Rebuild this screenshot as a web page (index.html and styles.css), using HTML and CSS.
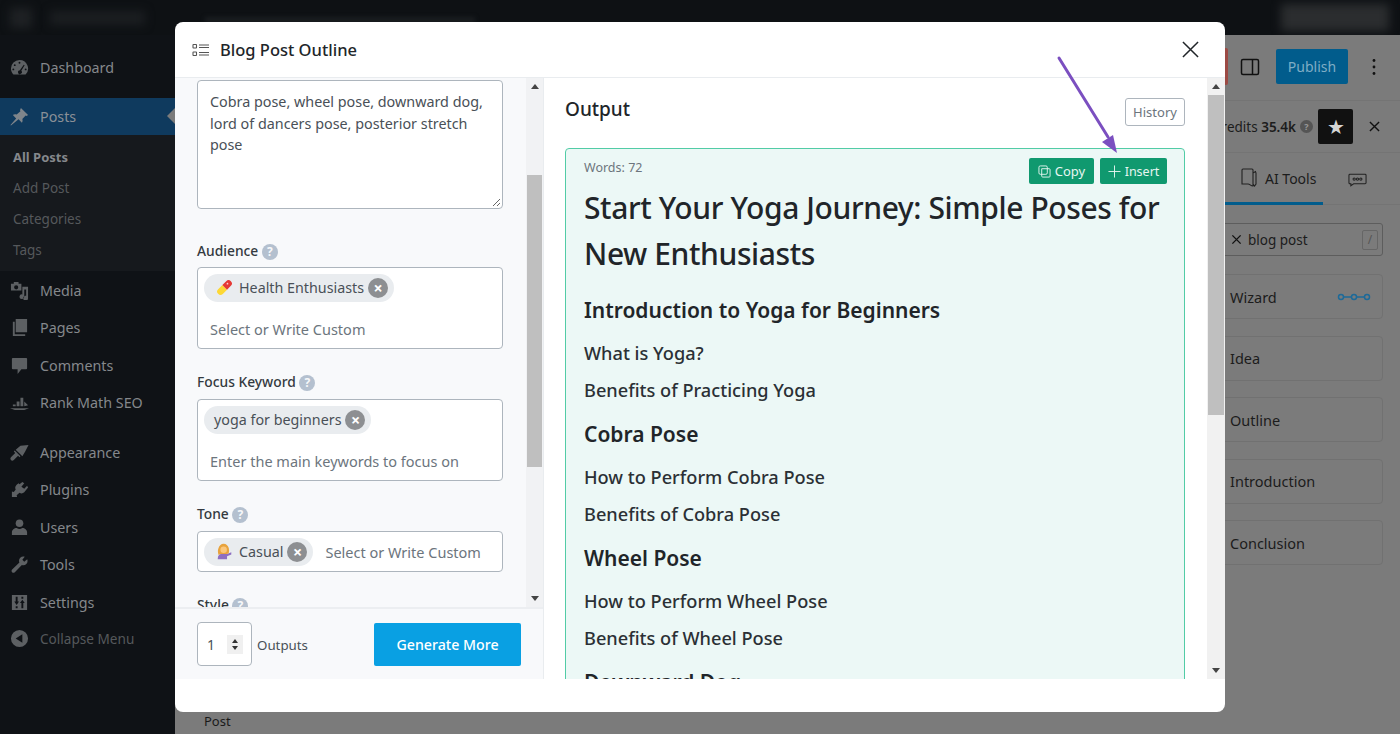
FILE: index.html
```html
<!DOCTYPE html>
<html lang="en">
<head>
    <meta charset="UTF-8">
    <meta name="viewport" content="width=device-width, initial-scale=1.0">
    <title>Blog Post Outline</title>
    <link rel="stylesheet" href="styles.css">
</head>
<body>
    <!-- Blurred admin bar -->
    <div class="adminbar">
        <span class="blur blur-logo"></span>
        <span class="blur blur-title"></span>
        <span class="blur blur-mid"></span>
        <span class="blur blur-user"></span>
    </div>

    <div class="page">
        <nav class="sidebar">
            <a class="menu-item first">
                <svg class="menu-icon" viewBox="0 0 20 20"><path d="M10 2a9 9 0 0 0-9 9c0 2.500 1 4.700 2.600 6.300h12.800A9 9 0 0 0 10 2zm0 2a1 1 0 1 1 0 2 1 1 0 0 1 0-2zM5 6.500a1 1 0 1 1 0 2 1 1 0 0 1 0-2zm9.500.6.900.5-3.500 5.900a2 2 0 1 1-1.500-.6zM3.500 11a1 1 0 1 1 0 2 1 1 0 0 1 0-2zm13 0a1 1 0 1 1 0 2 1 1 0 0 1 0-2z" fill-rule="evenodd"/></svg>
                Dashboard
            </a>
            <a class="menu-item active">
                <svg class="menu-icon" viewBox="0 0 20 20"><path d="M11.500 1l7.500 7.500-1.500 1-1-.5-3.500 3.500c.5 1.500.2 3-.5 4l-3.500-3.500L1 19.500l-.5-.5 6-7L3 8.500c1-.8 2.500-1 4-.5L11 4.500l-.5-1z"/></svg>
                Posts
                <span class="active-arrow"></span>
            </a>
            <div class="submenu">
                <a class="sub-item current">All Posts</a>
                <a class="sub-item">Add Post</a>
                <a class="sub-item">Categories</a>
                <a class="sub-item">Tags</a>
            </div>
            <a class="menu-item">
                <svg class="menu-icon" viewBox="0 0 20 20"><path d="M1 3h3V1h5v2h3v7H1zm5.500 1.500a2.200 2.200 0 1 0 0 4.400 2.200 2.200 0 0 0 0-4.400zM13 6h6v12a2.500 2.500 0 1 1-2-2.400V9h-2v7.500a2.500 2.500 0 1 1-2-2.400z" fill-rule="evenodd"/></svg>
                Media
            </a>
            <a class="menu-item">
                <svg class="menu-icon" viewBox="0 0 20 20"><path d="M6 1h12v14H6zM3 4h2v13h11v2H3z"/></svg>
                Pages
            </a>
            <a class="menu-item">
                <svg class="menu-icon" viewBox="0 0 20 20"><path d="M3 2h14a1 1 0 0 1 1 1v10a1 1 0 0 1-1 1h-5l-4 5v-5H3a1 1 0 0 1-1-1V3a1 1 0 0 1 1-1z"/></svg>
                Comments
            </a>
            <a class="menu-item">
                <svg class="menu-icon" viewBox="0 0 20 20"><path d="M7 9h3v5H7zM11 5h3v9h-3zM15 9l4 4-4 1zM3 12h3v2H3zM0 16h20l-5 2H5z"/></svg>
                Rank Math SEO
            </a>
            <a class="menu-item separated">
                <svg class="menu-icon" viewBox="0 0 20 20"><path d="M19.500 2l-8.500 1-5 4 7 7 3-5zM5 8l-1 1 1.500 1.500L1 15c-.8.8-.8 2 0 3s2 .8 3 0l4.500-4.500L10 15l1-1z"/></svg>
                Appearance
            </a>
            <a class="menu-item">
                <svg class="menu-icon" viewBox="0 0 20 20"><path d="M13 2l2 1.500-3 3.500 3 2.200 3-3.200 1 2-4 5c-1.500 1.500-3.500 1.500-5 .5L7 16l.5 2H2v-6l2 .5 2-2.500c-1-1.500-.5-3.500 1-5l2-1.500 1 1z"/></svg>
                Plugins
            </a>
            <a class="menu-item">
                <svg class="menu-icon" viewBox="0 0 20 20"><circle cx="10" cy="5.500" r="4"/><path d="M2 18v-3c0-2.500 2.500-4.500 5-4.500 1 .8 2 1 3 1s2-.2 3-1c2.500 0 5 2 5 4.500v3z"/></svg>
                Users
            </a>
            <a class="menu-item">
                <svg class="menu-icon" viewBox="0 0 20 20"><path d="M14 1.500c-2.500 0-4.500 2-4.500 4.500 0 .7.100 1.300.400 1.800L2 15.500a2 2 0 0 0 2.800 2.800l7.700-7.800c.5.200 1 .3 1.500.3 2.500 0 4.500-2 4.500-4.500 0-.7-.2-1.300-.4-1.800L15 7l-2-2 2.500-3.200c-.5-.2-1-.3-1.500-.3z"/></svg>
                Tools
            </a>
            <a class="menu-item">
                <svg class="menu-icon" viewBox="0 0 20 20"><path d="M2 2h16v16H2zm4 2v5H4.500L7 12.500 9.500 9H8V4zm0 10v2h2v-2zm6-10v2h2V4zm1 3-2.500 3.500H12V16h2v-5.500h1.500z" fill-rule="evenodd"/></svg>
                Settings
            </a>
            <a class="menu-item collapse">
                <svg class="menu-icon" viewBox="0 0 20 20"><path d="M10 1a9 9 0 1 0 0 18 9 9 0 0 0 0-18zm3 4.500v9L6 10z" fill-rule="evenodd"/></svg>
                Collapse Menu
            </a>
        </nav>

        <main class="editor">
            <div class="editor-top">
                <span class="save-sliver"></span>
                <svg class="panel-icon" viewBox="0 0 24 24"><rect x="3.500" y="4.500" width="17" height="15" rx="1.500"/><path d="M14.500 4.500v15"/></svg>
                <button class="publish">Publish</button>
                <svg class="dots" viewBox="0 0 4 18"><circle cx="2" cy="2.500" r="1.400"/><circle cx="2" cy="9" r="1.400"/><circle cx="2" cy="15.500" r="1.400"/></svg>
            </div>
            <div class="editor-body">
                <div class="canvas">
                    <div class="breadcrumb">Post</div>
                </div>
                <aside class="ai-panel">
                    <div class="credits">
                        <span class="credits-text">Credits <b>35.4k</b></span>
                        <span class="help dark">?</span>
                        <span class="star-btn">★</span>
                        <svg class="panel-close" viewBox="0 0 12 12"><path d="M1 1l10 10M11 1L1 11"/></svg>
                    </div>
                    <div class="tabs">
                        <div class="tab selected">
                            <svg class="tab-icon" viewBox="0 0 16 20"><path d="M2 1h9a1 1 0 0 1 1 1v16c-2.500 0-3-2-5-2H1V2a1 1 0 0 1 1-1zM12 5l2.500-1.500L15 5v11l-1.500 2-1.500-2"/></svg>
                            AI Tools
                        </div>
                        <div class="tab chat">
                            <svg class="tab-icon wide" viewBox="0 0 20 14"><path d="M2 1h16a1 1 0 0 1 1 1v8a1 1 0 0 1-1 1H6l-3 2v-2H2a1 1 0 0 1-1-1V2a1 1 0 0 1 1-1z"/><circle cx="6.500" cy="6" r="1.200"/><circle cx="10" cy="6" r="1.200"/><circle cx="13.500" cy="6" r="1.200"/></svg>
                        </div>
                    </div>
                    <div class="tool-search">
                        <svg class="search-x" viewBox="0 0 12 12"><path d="M1.500 1.500l9 9M10.500 1.500l-9 9"/></svg>
                        blog post
                        <span class="slash">/</span>
                    </div>
                    <div class="tool-card">
                        Wizard
                        <svg class="wizard-icon" viewBox="0 0 34 10"><path d="M4 5h26"/><circle cx="4" cy="5" r="2.500"/><circle cx="17" cy="5" r="2.500"/><circle cx="30" cy="5" r="2.500"/></svg>
                    </div>
                    <div class="tool-card">Idea</div>
                    <div class="tool-card">Outline</div>
                    <div class="tool-card">Introduction</div>
                    <div class="tool-card">Conclusion</div>
                </aside>
            </div>
        </main>
    </div>

    <!-- Modal -->
    <div class="modal">
        <header class="modal-head">
            <svg class="outline-icon" viewBox="0 0 18 14"><rect x="1" y="1.500" width="3.500" height="3.500" rx=".5"/><rect x="1" y="9" width="3.500" height="3.500" rx=".5"/><path d="M7 2h10M7 4.500h10M7 9.500h10M7 12h10"/></svg>
            <h1>Blog Post Outline</h1>
            <svg class="modal-close" viewBox="0 0 18 18"><path d="M1 1l16 16M17 1L1 17"/></svg>
        </header>
        <div class="modal-body">
            <section class="form-col">
                <div class="form-main">
                    <div class="form-scroll">
                        <div class="textarea">Cobra pose, wheel pose, downward dog, lord of dancers pose, posterior stretch pose
                            <svg class="grip" viewBox="0 0 10 10"><path d="M9 2L2 9M9 6L6 9"/></svg>
                        </div>

                        <label class="field-label gap-top">Audience <span class="help">?</span></label>
                        <div class="chip-box stacked">
                            <span class="chip">
                                <svg class="emoji" viewBox="0 0 20 20"><path d="M2.500 12l5-5 5.500 5.500-5 5a3.800 3.800 0 0 1-5.500-5.500z" fill="#fdd835"/><path d="M7.500 7l4.500-4.500A3.800 3.800 0 0 1 17.500 8L13 12.500z" fill="#e53935"/><circle cx="13.500" cy="5.500" r="1" fill="#ffcdd2"/></svg>
                                Health Enthusiasts
                                <span class="chip-x">×</span>
                            </span>
                            <span class="placeholder">Select or Write Custom</span>
                        </div>

                        <label class="field-label">Focus Keyword <span class="help">?</span></label>
                        <div class="chip-box stacked">
                            <span class="chip plain">
                                yoga for beginners
                                <span class="chip-x">×</span>
                            </span>
                            <span class="placeholder">Enter the main keywords to focus on</span>
                        </div>

                        <label class="field-label">Tone <span class="help">?</span></label>
                        <div class="chip-box inline">
                            <span class="chip">
                                <svg class="emoji" viewBox="0 0 20 20"><path d="M2 19c0-4 2-6 4-6h7l5-2v2.500l-5 2V19z" fill="#8e6fc1"/><path d="M3 14c-1-3-1-6 0-8 1-3 3-5 6-5s5 2 6 5c.5 2 .5 4 0 6l-2 1H5z" fill="#e8a33d"/><circle cx="9" cy="8" r="3.800" fill="#fbc77d"/></svg>
                                Casual
                                <span class="chip-x">×</span>
                            </span>
                            <span class="placeholder">Select or Write Custom</span>
                        </div>

                        <label class="field-label">Style <span class="help">?</span></label>
                    </div>
                    <div class="scrollbar">
                        <span class="arrow up"></span>
                        <span class="thumb form-thumb"></span>
                        <span class="arrow down"></span>
                    </div>
                </div>
                <div class="form-foot">
                    <div class="stepper">
                        1
                        <span class="spin"><i class="spin-up"></i><i class="spin-down"></i></span>
                    </div>
                    <span class="outputs">Outputs</span>
                    <button class="generate">Generate More</button>
                </div>
            </section>

            <section class="output-col">
                <div class="output-scroll">
                    <div class="output-head">
                        <h2>Output</h2>
                        <button class="history">History</button>
                    </div>
                    <article class="result">
                        <div class="result-top">
                            <span class="words">Words: 72</span>
                            <button class="green-btn copy-btn">
                                <svg viewBox="0 0 14 14"><rect x="1" y="1" width="9" height="9" rx="1.500"/><path d="M4 4h8a1 1 0 0 1 1 1v7a1 1 0 0 1-1 1H5a1 1 0 0 1-1-1z"/></svg>
                                Copy
                            </button>
                            <button class="green-btn insert-btn">
                                <svg viewBox="0 0 14 14"><path d="M7 .5v13M.5 7h13"/></svg>
                                Insert
                            </button>
                        </div>
                        <h3 class="title">Start Your Yoga Journey: Simple Poses for New Enthusiasts</h3>
                        <h4>Introduction to Yoga for Beginners</h4>
                        <p>What is Yoga?</p>
                        <p>Benefits of Practicing Yoga</p>
                        <h4>Cobra Pose</h4>
                        <p>How to Perform Cobra Pose</p>
                        <p>Benefits of Cobra Pose</p>
                        <h4>Wheel Pose</h4>
                        <p>How to Perform Wheel Pose</p>
                        <p>Benefits of Wheel Pose</p>
                        <h4>Downward Dog</h4>
                    </article>
                </div>
                <div class="scrollbar wide">
                    <span class="arrow up"></span>
                    <span class="thumb output-thumb"></span>
                    <span class="arrow down"></span>
                </div>
            </section>
        </div>
        <div class="modal-pad"></div>
    </div>

    <!-- Annotation arrow drawn over the screenshot -->
    <svg class="annotation" viewBox="0 0 70 105"><path d="M4 3L53 82" stroke="#7b4fc0" stroke-width="3" fill="none" stroke-linecap="round"/><path d="M62 98L47 87 58 80z" fill="#7b4fc0"/></svg>
</body>
</html>
```

FILE: styles.css
```css
* {
    box-sizing: border-box;
}
html, body {
    height: 100%;
}
body {
    margin: 0;
    overflow: hidden;
    font-family: "Noto Sans", "Open Sans", sans-serif;
    background-color: #7b7b7b;
    color: #1d2327;
}
button {
    font-family: inherit;
    cursor: pointer;
}
svg {
    display: block;
    flex: none;
}

/* Admin bar */
.adminbar {
    height: 35px;
    background-color: #0e1114;
    display: flex;
    align-items: center;
    overflow: hidden;
}
.blur {
    display: block;
    filter: blur(5px);
}
.blur-logo {
    width: 22px;
    height: 20px;
    margin-left: 10px;
    background-color: #1e2124;
}
.blur-title {
    width: 95px;
    height: 14px;
    margin-left: 18px;
    background-color: #1b1e21;
}
.blur-mid {
    width: 270px;
    height: 6px;
    margin: 4px 0 0 60px;
    background-color: #1a1d20;
    filter: blur(2px);
}
.blur-user {
    width: 108px;
    height: 27px;
    margin-left: auto;
    margin-right: 11px;
    background-color: #2b2d2f;
}

/* Page */
.page {
    display: flex;
    height: 699px;
}

/* Sidebar */
.sidebar {
    width: 175px;
    flex: none;
    background-color: #0f1216;
    padding-top: 13.400px;
    color: #85888c;
    font-size: 14.300px;
}
.menu-item {
    display: flex;
    align-items: center;
    height: 37.500px;
    padding-left: 10px;
    gap: 11px;
    position: relative;
}
.menu-item.first {
    margin-bottom: 12px;
}
.menu-item.separated {
    margin-top: 12px;
}
.menu-icon {
    width: 19px;
    height: 19px;
    fill: #5d6063;
}
.menu-item.active {
    background-color: #0f3a5e;
    color: #8a9097;
}
.menu-item.active .menu-icon {
    fill: #7f858b;
}
.active-arrow {
    position: absolute;
    right: 0;
    top: 10px;
    border: 8px solid transparent;
    border-left: 0;
    border-right-color: #7b7b7b;
}
.collapse {
    color: #55585b;
    font-size: 13.600px;
    height: 35px;
}
.submenu {
    background-color: #16191d;
    padding: 7px 0 5px 13px;
    font-size: 13.500px;
    color: #55585b;
    height: 136px;
}
.sub-item {
    display: flex;
    align-items: center;
    height: 30.700px;
}
.sub-item.current {
    color: #85888c;
    font-weight: 700;
    font-size: 13px;
    padding-bottom: 2px;
}

/* Editor behind the modal */
.editor {
    flex: 1;
    display: flex;
    flex-direction: column;
    min-width: 0;
}
.editor-top {
    height: 66px;
    flex: none;
    display: flex;
    align-items: center;
    justify-content: flex-end;
    padding: 0 24px 2px 0;
    border-bottom: 1px solid #747474;
}
.save-sliver {
    width: 30px;
    height: 37px;
    background-color: #9c4a44;
    border-radius: 2px;
    margin-right: 10px;
}
.panel-icon {
    width: 24px;
    height: 24px;
    fill: none;
    stroke: #111;
    stroke-width: 1.500;
    margin-right: 14px;
}
.publish {
    width: 72px;
    height: 35px;
    background-color: #015c8c;
    border: 0;
    border-radius: 2px;
    color: #7fadc5;
    font-size: 14px;
    margin-right: 24px;
}
.dots {
    width: 4px;
    height: 18px;
    fill: #111;
}
.editor-body {
    flex: 1;
    display: flex;
    min-height: 0;
}
.canvas {
    flex: 1;
    display: flex;
    flex-direction: column;
    justify-content: flex-end;
}
.breadcrumb {
    font-size: 13px;
    height: 27px;
    padding: 5px 0 0 29px;
    color: #1a1a1a;
}
.ai-panel {
    width: 210px;
    flex: none;
    padding-right: 17px;
    font-size: 14.500px;
    color: #1c1c1c;
    display: flex;
    flex-direction: column;
}
.credits {
    height: 52px;
    flex: none;
    display: flex;
    align-items: center;
    justify-content: flex-end;
    border-bottom: 1px solid #747474;
    margin-right: -17px;
    padding-right: 20px;
    font-size: 13.500px;
}
.credits-text b {
    font-weight: 600;
}
.help {
    display: inline-flex;
    align-items: center;
    justify-content: center;
    width: 16px;
    height: 16px;
    border-radius: 50%;
    background-color: #b4c0cf;
    color: #f7f8fa;
    font-size: 12px;
    font-weight: 700;
    line-height: 1;
}
.help.dark {
    background-color: #555;
    color: #999;
    width: 13px;
    height: 13px;
    font-size: 9px;
    margin: 0 5px 0 4px;
}
.star-btn {
    width: 35px;
    height: 35px;
    background-color: #111;
    border-radius: 2px;
    color: #d4d4d4;
    display: flex;
    align-items: center;
    justify-content: center;
    font-size: 20px;
    margin-right: 16px;
}
.panel-close {
    width: 11px;
    height: 11px;
    fill: none;
    stroke: #111;
    stroke-width: 1.500;
}
.tabs {
    height: 52px;
    flex: none;
    display: flex;
    align-items: center;
    border-bottom: 1px solid #747474;
    margin-right: -17px;
}
.tab {
    height: 52px;
    display: flex;
    align-items: center;
    gap: 8px;
    font-size: 14px;
    padding-top: 2px;
}
.tab.selected {
    width: 133px;
    padding-left: 51px;
    border-bottom: 3px solid #015c8c;
}
.tab.chat {
    margin-left: 25px;
}
.tab-icon {
    width: 16px;
    height: 20px;
    fill: none;
    stroke: #222;
    stroke-width: 1.100;
}
.tab-icon.wide {
    width: 19px;
    height: 14px;
}
.tool-search {
    height: 33px;
    flex: none;
    margin: 18px 0;
    border: 1px solid #5d5d5d;
    border-radius: 3px;
    display: flex;
    align-items: center;
    gap: 6px;
    padding: 0 4px 0 40px;
    font-size: 13.500px;
}
.search-x {
    width: 11px;
    height: 11px;
    fill: none;
    stroke: #111;
    stroke-width: 1.500;
}
.slash {
    margin-left: auto;
    width: 16px;
    height: 20px;
    border: 1px solid #666;
    border-radius: 2px;
    color: #555;
    font-size: 12px;
    text-align: center;
}
.tool-card {
    height: 45px;
    flex: none;
    margin-bottom: 16.500px;
    border: 1px solid #717171;
    border-radius: 4px;
    display: flex;
    align-items: center;
    justify-content: space-between;
    padding: 0 11px 0 39px;
}
.wizard-icon {
    width: 34px;
    height: 10px;
    fill: #7b7b7b;
    stroke: #1d6a99;
    stroke-width: 1.500;
}

/* Modal */
.modal {
    position: absolute;
    left: 175px;
    top: 22px;
    width: 1050px;
    height: 690px;
    background-color: #fff;
    border-radius: 8px;
    display: flex;
    flex-direction: column;
    overflow: hidden;
}
.modal-head {
    height: 56px;
    flex: none;
    display: flex;
    align-items: center;
    padding: 0 26px 0 17px;
    border-bottom: 1px solid #e9ecef;
}
.outline-icon {
    width: 18px;
    height: 14px;
    fill: none;
    stroke: #555;
    stroke-width: 1.100;
    margin-right: 10px;
}
.modal-head h1 {
    font-size: 16.500px;
    font-weight: 500;
    margin: 0;
    color: #212529;
}
.modal-close {
    margin-left: auto;
    width: 17px;
    height: 17px;
    fill: none;
    stroke: #212529;
    stroke-width: 1.600;
}
.modal-body {
    height: 601px;
    flex: none;
    display: flex;
}

/* Left form column */
.form-col {
    width: 369px;
    flex: none;
    display: flex;
    flex-direction: column;
    background-color: #f8f9fb;
    border-right: 1px solid #e9ecef;
}
.form-main {
    flex: 1;
    display: flex;
    min-height: 0;
    border-bottom: 2px solid #eceef1;
}
.form-scroll {
    flex: 1;
    padding: 2px 23px 0 22px;
    overflow: hidden;
    color: #495057;
    font-size: 14.300px;
}
.textarea {
    height: 128.500px;
    padding: 10px 12px;
    font-size: 14.350px;
    line-height: 21.500px;
    background-color: #fff;
    border: 1px solid #adb5bd;
    border-radius: 4px;
    position: relative;
}
.grip {
    position: absolute;
    right: 1px;
    bottom: 1px;
    width: 10px;
    height: 10px;
    fill: none;
    stroke: #666;
}
.field-label {
    display: block;
    margin: 23px 0 8.500px;
    height: 19px;
    line-height: 19px;
    font-size: 13.800px;
    font-weight: 500;
    color: #343a40;
}
.field-label.gap-top {
    margin: 32px 0 7.500px;
}
.chip-box {
    background-color: #fff;
    border: 1px solid #adb5bd;
    border-radius: 4px;
    padding: 5.500px 6px;
}
.chip-box.stacked {
    height: 81.500px;
}
.chip-box.inline {
    height: 41px;
    display: flex;
    align-items: center;
    gap: 12px;
    padding-top: 5px;
    padding-bottom: 5px;
}
.chip {
    display: inline-flex;
    align-items: center;
    height: 28px;
    padding: 0 6px 0 12px;
    border-radius: 15px;
    background-color: #e9ecef;
    gap: 4px;
}
.chip.plain {
    padding-left: 10px;
}
.emoji {
    width: 17px;
    height: 17px;
    margin-right: 2px;
}
.chip-x {
    width: 20px;
    height: 20px;
    border-radius: 50%;
    background-color: #8d8f92;
    color: #fff;
    display: flex;
    align-items: center;
    justify-content: center;
    font-size: 16px;
    font-weight: 700;
    line-height: 1;
}
.placeholder {
    color: #6c757d;
    font-size: 14.500px;
}
.stacked .placeholder {
    display: block;
    margin: 17px 0 0 6px;
}
.scrollbar {
    width: 17px;
    flex: none;
    display: flex;
    flex-direction: column;
    background-color: #f1f2f4;
    position: relative;
}
.scrollbar.wide {
    width: 18px;
    background-color: #f1f1f1;
}
.thumb {
    display: block;
    background-color: #bfbfbf;
    margin: 0 1px;
}
.form-thumb {
    height: 292px;
    margin-top: 80px;
}
.output-thumb {
    height: 320px;
    margin-top: 0;
}
.arrow {
    display: block;
    width: 0;
    border: 4px solid transparent;
    align-self: center;
}
.arrow.up {
    border-top: 0;
    border-bottom: 5px solid #444;
    margin: 6px 0 6px;
}
.arrow.down {
    border-bottom: 0;
    border-top: 5px solid #444;
    margin-top: auto;
    margin-bottom: 6px;
}
.form-foot {
    height: 70px;
    flex: none;
    display: flex;
    align-items: center;
    padding: 1px 22px 0 22px;
    font-size: 13.300px;
    color: #495057;
}
.stepper {
    width: 55px;
    height: 44px;
    margin-top: -1px;
    background-color: #fff;
    border: 1px solid #adb5bd;
    border-radius: 4px;
    display: flex;
    align-items: center;
    justify-content: space-between;
    padding: 0 8px 0 9px;
    font-size: 14px;
}
.spin {
    width: 16px;
    height: 19px;
    background-color: #f0f0f0;
    display: flex;
    flex-direction: column;
    align-items: center;
    justify-content: center;
    gap: 3px;
}
.spin i {
    display: block;
    border: 3.500px solid transparent;
}
.spin-up {
    border-top: 0 !important;
    border-bottom: 4px solid #333 !important;
}
.spin-down {
    border-bottom: 0 !important;
    border-top: 4px solid #333 !important;
}
.outputs {
    margin-left: 5px;
}
.generate {
    margin-left: auto;
    margin-top: -1px;
    width: 147px;
    height: 43px;
    border: 0;
    border-radius: 2px;
    background-color: #09a0e3;
    color: #fff;
    font-size: 14.200px;
    font-weight: 500;
}

/* Right output column */
.output-col {
    flex: 1;
    display: flex;
    min-width: 0;
}
.output-scroll {
    flex: 1;
    overflow: hidden;
    padding: 0 22px 0 21px;
}
.output-head {
    height: 70px;
    display: flex;
    align-items: flex-start;
    justify-content: space-between;
}
.output-head h2 {
    margin: 18px 0 0;
    font-size: 19px;
    font-weight: 500;
    color: #212529;
}
.history {
    width: 60px;
    height: 28px;
    background-color: #fff;
    border: 1px solid #adb5bd;
    border-radius: 3px;
    color: #6c757d;
    font-size: 13px;
    padding: 0;
    margin-top: 20px;
}
.result {
    background-color: #ecf8f6;
    border: 1px solid #52cca6;
    border-radius: 4px;
    padding: 9px 17px 0 18px;
    height: 600px;
    color: #212529;
}
.result-top {
    display: flex;
    align-items: flex-start;
    gap: 6px;
    height: 26px;
}
.words {
    font-size: 12.500px;
    color: #6c757d;
    margin-right: auto;
    padding-top: 1px;
}
.green-btn {
    height: 26px;
    display: flex;
    align-items: center;
    justify-content: center;
    gap: 4px;
    padding: 0;
    background-color: #10996f;
    border: 0;
    border-radius: 2px;
    color: #e7f6f1;
    font-size: 13px;
}
.copy-btn {
    width: 65px;
}
.insert-btn {
    width: 67px;
    font-size: 12.500px;
}
.green-btn svg {
    width: 13px;
    height: 13px;
    fill: none;
    stroke: #e7f6f1;
    stroke-width: 1;
}
.title {
    font-size: 30px;
    letter-spacing: -0.400px;
    font-weight: 500;
    line-height: 46px;
    margin: 1px 0 17.500px;
}
.result h4 {
    font-size: 21px;
    font-weight: 600;
    line-height: 30px;
    margin: 16px 0 15px;
}
.result p {
    font-size: 18.200px;
    font-weight: 500;
    line-height: 26px;
    margin: 0 0 11px;
    color: #2b3035;
}

/* Purple annotation */
.annotation {
    position: absolute;
    left: 1055px;
    top: 55px;
    width: 70px;
    height: 105px;
}
```
